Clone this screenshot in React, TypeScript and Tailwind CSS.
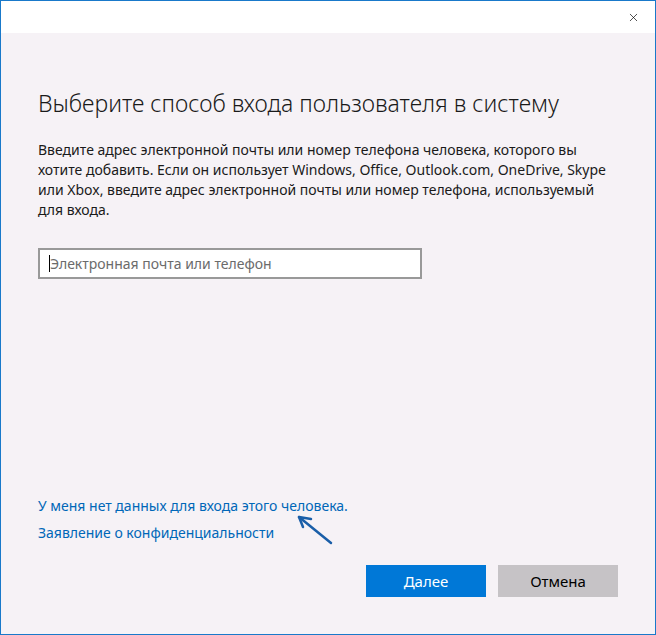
import { X } from 'lucide-react'

const font = { fontFamily: '"Noto Sans", "Open Sans", Arial, sans-serif' }

function Arrow() {
  return (
    <svg className="absolute left-[290px] top-[510px]" width="46" height="36" viewBox="0 0 46 36" fill="none">
      <path d="M40 32 L8 6" stroke="#1a5ea8" strokeWidth="2.5" strokeLinecap="round" />
      <path d="M8 6 L20 8 M8 6 L12 16" stroke="#1a5ea8" strokeWidth="2.5" strokeLinecap="round" />
    </svg>
  )
}

export default function App() {
  return (
    <div
      className="relative w-[656px] h-[635px] border border-[#1979ca] flex flex-col bg-[#f6f2f6] overflow-hidden"
      style={font}
    >
      {/* title bar */}
      <div className="h-[32px] bg-white flex items-center justify-end pr-[15px] shrink-0">
        <X className="w-[13px] h-[13px] text-black" strokeWidth={1.25} />
      </div>

      <div className="flex-1 flex flex-col px-[37px] pt-[54px] pb-[37px]">
        <h1 className="text-[23px] leading-[32px] font-light text-[#1a1a1a]">
          Выберите способ входа пользователя в систему
        </h1>
        <p className="mt-[21px] text-[14px] leading-[20px] text-[#1a1a1a] w-[575px]">
          Введите адрес электронной почты или номер телефона человека, которого вы хотите добавить. Если он использует
          Windows, Office, Outlook.com, OneDrive, Skype или Xbox, введите адрес электронной почты или номер телефона,
          используемый для входа.
        </p>
        <div className="mt-[28px] w-[384px] h-[31px] border-2 border-[#999999] bg-white flex items-center pl-[9px]">
          <span className="w-px h-[17px] bg-black" />
          <input
            className="flex-1 bg-transparent outline-none text-[14px] text-black placeholder:text-[#6b6b6b]"
            placeholder="Электронная почта или телефон"
          />
        </div>

        <div className="mt-auto flex flex-col gap-[7px]">
          <a className="text-[14px] leading-[20px] text-[#0067b8] w-fit">У меня нет данных для входа этого человека.</a>
          <a className="text-[14px] leading-[20px] text-[#0067b8] w-fit">Заявление о конфиденциальности</a>
        </div>

        <div className="mt-[22px] flex justify-end gap-[12px]">
          <button className="w-[120px] h-[32px] bg-[#0078d7] text-white text-[15px]">Далее</button>
          <button className="w-[120px] h-[32px] bg-[#c6c3c6] text-black text-[15px]">Отмена</button>
        </div>
      </div>
      <Arrow />
    </div>
  )
}
